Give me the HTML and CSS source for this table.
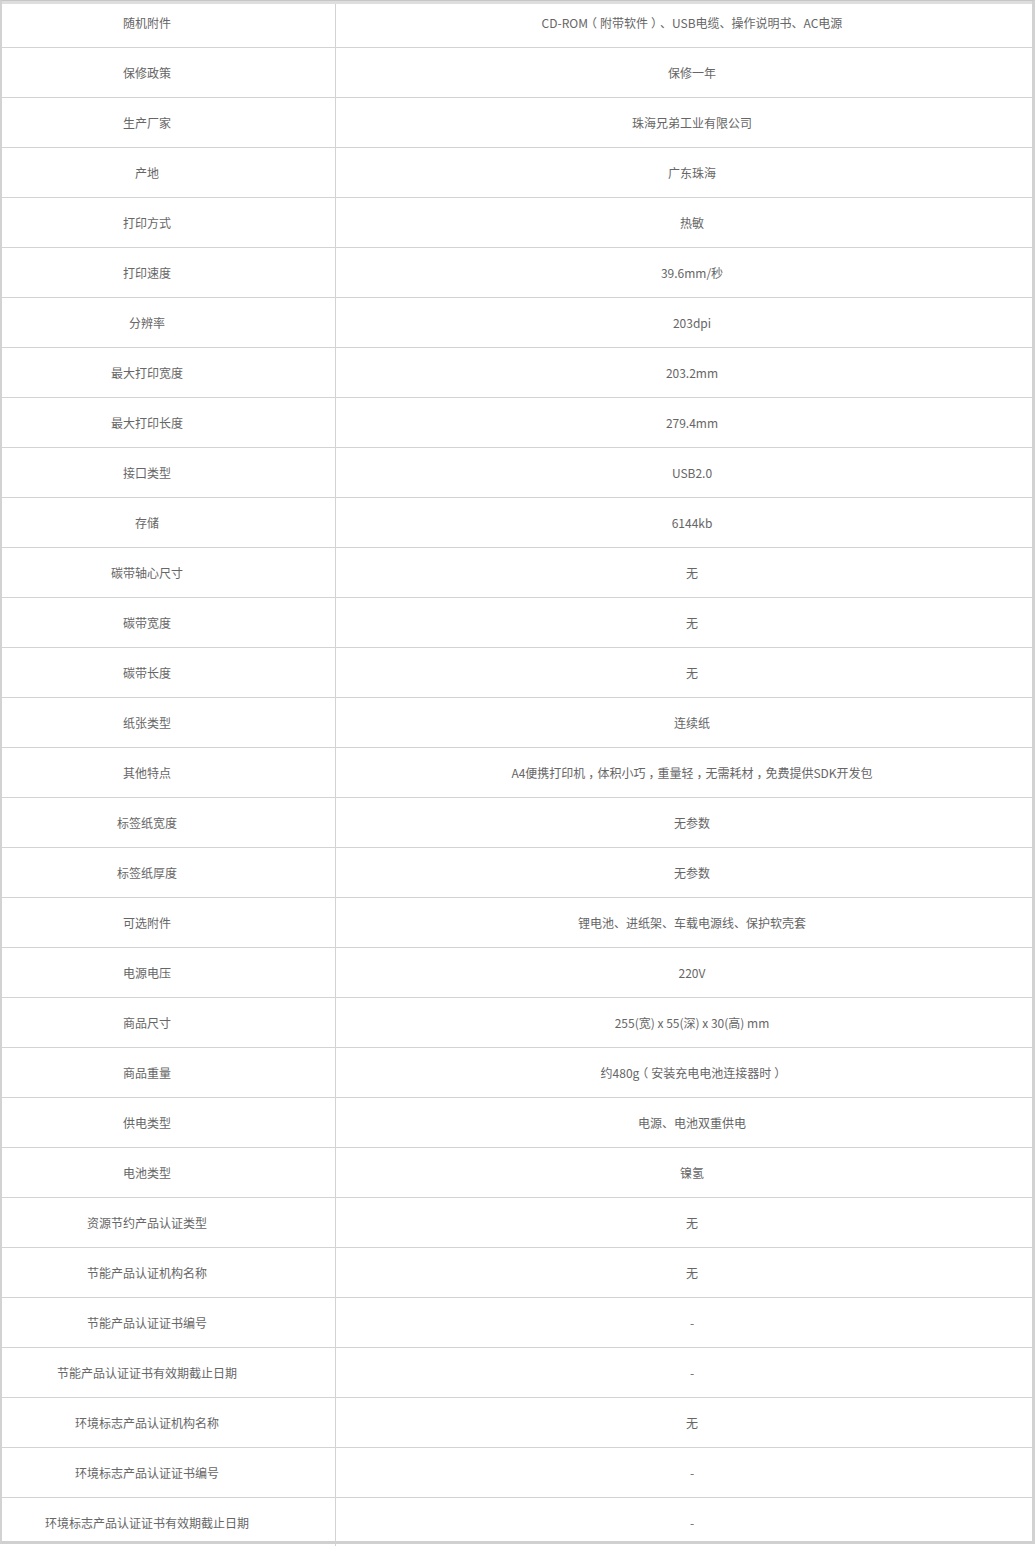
FILE: index.html
```html
<!DOCTYPE html>
<html lang="zh-CN">
<head>
<meta charset="utf-8">
<title>商品参数</title>
<link rel="stylesheet" href="styles.css">
</head>
<body>
<div class="frame">
  <table class="spec">
    <tbody>
      <tr><td class="k">随机附件</td><td class="v">CD-ROM<span class="fw">（</span>附带软件<span class="fw">）</span>、USB电缆、操作说明书、AC电源</td></tr>
      <tr><td class="k">保修政策</td><td class="v">保修一年</td></tr>
      <tr><td class="k">生产厂家</td><td class="v">珠海兄弟工业有限公司</td></tr>
      <tr><td class="k">产地</td><td class="v">广东珠海</td></tr>
      <tr><td class="k">打印方式</td><td class="v">热敏</td></tr>
      <tr><td class="k">打印速度</td><td class="v">39.6mm/秒</td></tr>
      <tr><td class="k">分辨率</td><td class="v">203dpi</td></tr>
      <tr><td class="k">最大打印宽度</td><td class="v">203.2mm</td></tr>
      <tr><td class="k">最大打印长度</td><td class="v">279.4mm</td></tr>
      <tr><td class="k">接口类型</td><td class="v">USB2.0</td></tr>
      <tr><td class="k">存储</td><td class="v">6144kb</td></tr>
      <tr><td class="k">碳带轴心尺寸</td><td class="v">无</td></tr>
      <tr><td class="k">碳带宽度</td><td class="v">无</td></tr>
      <tr><td class="k">碳带长度</td><td class="v">无</td></tr>
      <tr><td class="k">纸张类型</td><td class="v">连续纸</td></tr>
      <tr><td class="k">其他特点</td><td class="v">A4便携打印机<span class="fw">，</span>体积小巧<span class="fw">，</span>重量轻<span class="fw">，</span>无需耗材<span class="fw">，</span>免费提供SDK开发包</td></tr>
      <tr><td class="k">标签纸宽度</td><td class="v">无参数</td></tr>
      <tr><td class="k">标签纸厚度</td><td class="v">无参数</td></tr>
      <tr><td class="k">可选附件</td><td class="v">锂电池、进纸架、车载电源线、保护软壳套</td></tr>
      <tr><td class="k">电源电压</td><td class="v">220V</td></tr>
      <tr><td class="k">商品尺寸</td><td class="v">255(宽) x 55(深) x 30(高) mm</td></tr>
      <tr><td class="k">商品重量</td><td class="v">约480g<span class="fw">（</span>安装充电电池连接器时<span class="fw">）</span></td></tr>
      <tr><td class="k">供电类型</td><td class="v">电源、电池双重供电</td></tr>
      <tr><td class="k">电池类型</td><td class="v">镍氢</td></tr>
      <tr><td class="k">资源节约产品认证类型</td><td class="v">无</td></tr>
      <tr><td class="k">节能产品认证机构名称</td><td class="v">无</td></tr>
      <tr><td class="k">节能产品认证证书编号</td><td class="v">-</td></tr>
      <tr><td class="k">节能产品认证证书有效期截止日期</td><td class="v">-</td></tr>
      <tr><td class="k">环境标志产品认证机构名称</td><td class="v">无</td></tr>
      <tr><td class="k">环境标志产品认证证书编号</td><td class="v">-</td></tr>
      <tr><td class="k">环境标志产品认证证书有效期截止日期</td><td class="v">-</td></tr>
    </tbody>
  </table>
  <div class="edge"></div>
</div>
</body>
</html>
```

FILE: styles.css
```css
html, body {
  margin: 0;
  padding: 0;
  background: #fff;
}

.frame {
  position: relative;
  width: 1035px;
  height: 1546px;
  overflow: hidden;
  background: #fff;
}

.spec {
  width: 1035px;
  margin-top: -2px;
  border-collapse: collapse;
  table-layout: fixed;
  font-family: "Noto Sans CJK SC", "Noto Sans", sans-serif;
  font-size: 12px;
  color: #666;
}

.spec td {
  height: 49px;
  padding: 0;
  border-bottom: 1px solid #d3d3d3;
  text-align: center;
  vertical-align: middle;
  line-height: 16px;
  box-sizing: content-box;
}

.spec td.k {
  width: 294px;
  padding-right: 41px;
  border-right: 1px solid #d3d3d3;
}

.spec td.v {
  padding-left: 13px;
}

.fw {
  display: inline-block;
  width: 1em;
  text-align: center;
  font-feature-settings: "halt";
}

.edge {
  position: absolute;
  top: 0;
  left: 0;
  right: 0;
  bottom: 2px;
  pointer-events: none;
  border-top: 1px solid #c6c6c6;
  border-left: 2px solid #d2d2d2;
  border-right: 3px solid #d2d2d2;
  border-bottom: 3px solid #d0d0d0;
  box-shadow: inset 0 3px 0 #dedede;
}
```
